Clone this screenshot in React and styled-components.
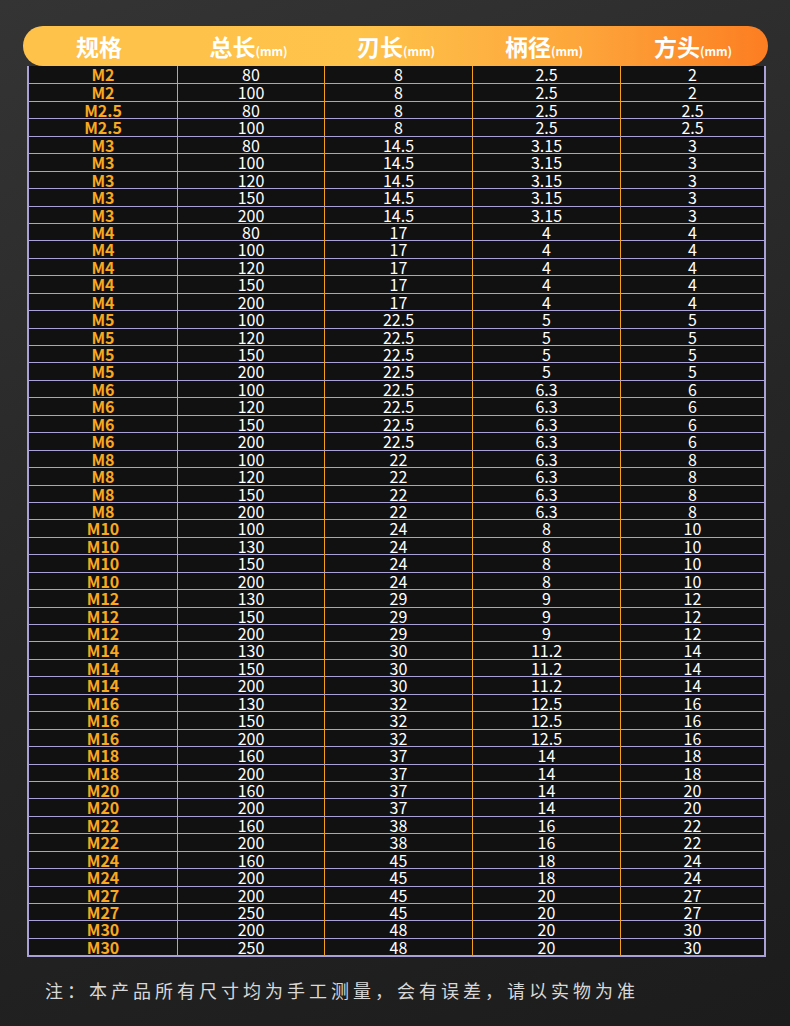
import React from 'react';
import styled, { createGlobalStyle } from 'styled-components';

const Global = createGlobalStyle`
  body { margin: 0; background: #232323; }
`;

const raw = `M2 80 8 2.5 2
M2 100 8 2.5 2
M2.5 80 8 2.5 2.5
M2.5 100 8 2.5 2.5
M3 80 14.5 3.15 3
M3 100 14.5 3.15 3
M3 120 14.5 3.15 3
M3 150 14.5 3.15 3
M3 200 14.5 3.15 3
M4 80 17 4 4
M4 100 17 4 4
M4 120 17 4 4
M4 150 17 4 4
M4 200 17 4 4
M5 100 22.5 5 5
M5 120 22.5 5 5
M5 150 22.5 5 5
M5 200 22.5 5 5
M6 100 22.5 6.3 6
M6 120 22.5 6.3 6
M6 150 22.5 6.3 6
M6 200 22.5 6.3 6
M8 100 22 6.3 8
M8 120 22 6.3 8
M8 150 22 6.3 8
M8 200 22 6.3 8
M10 100 24 8 10
M10 130 24 8 10
M10 150 24 8 10
M10 200 24 8 10
M12 130 29 9 12
M12 150 29 9 12
M12 200 29 9 12
M14 130 30 11.2 14
M14 150 30 11.2 14
M14 200 30 11.2 14
M16 130 32 12.5 16
M16 150 32 12.5 16
M16 200 32 12.5 16
M18 160 37 14 18
M18 200 37 14 18
M20 160 37 14 20
M20 200 37 14 20
M22 160 38 16 22
M22 200 38 16 22
M24 160 45 18 24
M24 200 45 18 24
M27 200 45 20 27
M27 250 45 20 27
M30 200 48 20 30
M30 250 48 20 30`;
const rows = raw.split('\n').map((l) => l.split(' '));

const cols = '148px 147px 148px 148px 1fr';
const font = `"Noto Sans CJK SC", "Noto Sans", sans-serif`;

const Page = styled.div`
  width: 790px;
  height: 1026px;
  background: linear-gradient(160deg, #343434 0%, #262626 50%, #1c1c1c 100%);
  padding-top: 26px;
  box-sizing: border-box;
  font-family: ${font};
`;

const Header = styled.div`
  margin: 0 22px 0 23px;
  height: 40px;
  border-radius: 20px;
  background: linear-gradient(90deg, #fec14a 0%, #fec34a 45%, #fda53a 75%, #fc7e22 100%);
  display: grid;
  grid-template-columns: 152px 147px 148px 148px 1fr;
  align-items: center;
  color: #fff;
  font-weight: 700;
  font-size: 23px;
`;

const HeadCell = styled.div`
  text-align: center;
  white-space: nowrap;
  small { font-size: 12px; font-weight: 700; }
`;

const Table = styled.div`
  margin: 0 24px 0 27px;
  border: 2px solid #aaa2d6;
  border-top: none;
  background: #111;
`;

const Row = styled.div`
  display: grid;
  grid-template-columns: ${cols};
  height: 17.45px;
  border-top: ${(p) => (p.$first ? 'none' : '1.5px solid #aaa2d6')};
  box-sizing: border-box;
`;

const Cell = styled.div`
  text-align: center;
  line-height: 17px;
  font-size: 16px;
  color: ${(p) => (p.$spec ? '#f9a81f' : '#fff')};
  font-weight: ${(p) => (p.$spec ? 700 : 400)};
  border-left: ${(p) => (p.$spec ? 'none' : '1px solid #f4a11a')};
  overflow: visible;
  white-space: nowrap;
`;

const Note = styled.div`
  margin: 20px 0 0 45px;
  color: #d8d8d8;
  font-size: 18px;
  letter-spacing: 4px;
  font-family: "Noto Sans CJK SC", serif;
`;

export default function App() {
  return (
    <Page>
      <Global />
      <Header>
        <HeadCell>规格</HeadCell>
        <HeadCell>总长<small>(mm)</small></HeadCell>
        <HeadCell>刃长<small>(mm)</small></HeadCell>
        <HeadCell>柄径<small>(mm)</small></HeadCell>
        <HeadCell>方头<small>(mm)</small></HeadCell>
      </Header>
      <Table>
        {rows.map((r, i) => (
          <Row key={i} $first={i === 0}>
            {r.map((v, j) => (
              <Cell key={j} $spec={j === 0}>{v}</Cell>
            ))}
          </Row>
        ))}
      </Table>
      <Note>注：本产品所有尺寸均为手工测量，会有误差，请以实物为准</Note>
    </Page>
  );
}
